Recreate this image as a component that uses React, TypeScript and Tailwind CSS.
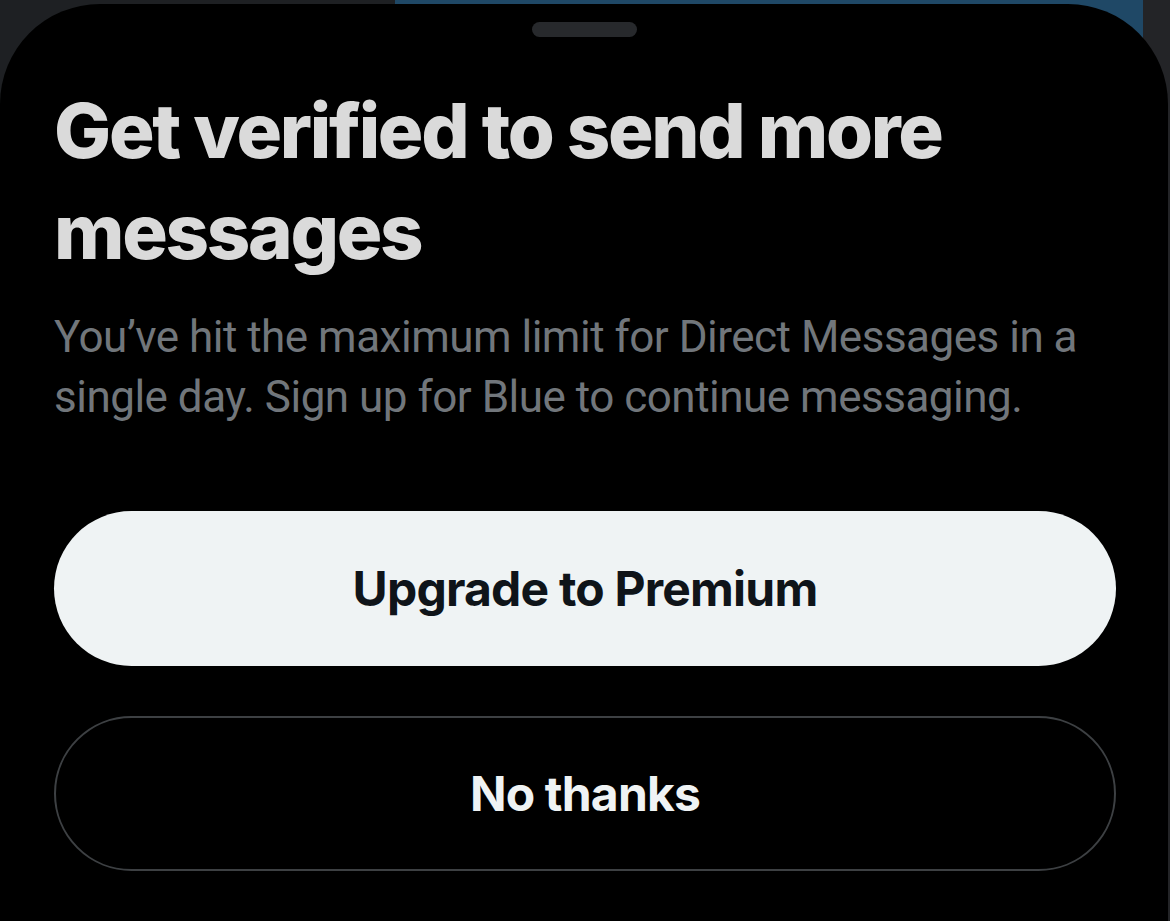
export default function App() {
  return (
    <div
      className="relative h-[921px] w-full overflow-hidden bg-black"
      style={{ fontFamily: "Inter, 'Noto Sans', sans-serif" }}
    >
      {/* page behind the sheet: sidebar, blue media strip, scroll gutter */}
      <div className="absolute inset-0 flex">
        <div className="w-[395px] bg-[#1e2023]" />
        <div className="flex-1 bg-[#1f4866]" />
        <div className="w-[27px] bg-[#232427]" />
      </div>

      <div className="relative mt-[4px] mr-[2px] flex h-[917px] flex-col rounded-t-[100px] bg-black pl-[54px] pr-[52px]">
        <div className="mt-[18px] flex justify-center">
          <div className="ml-[-2px] h-[15px] w-[105px] rounded-full bg-[#27292c]" />
        </div>

        <h1 className="mt-[43px] text-[76px] font-extrabold leading-[101px] tracking-[-2.3px] text-[#dadada]">
          Get verified to send more messages
        </h1>

        <p
          className="mt-[25px] text-[44px] leading-[60px] tracking-[-0.5px] text-[#71767b]"
          style={{ fontFamily: "Roboto, 'Noto Sans', sans-serif" }}
        >
          You’ve hit the maximum limit for Direct Messages in a single day. Sign up for Blue to continue messaging.
        </p>

        <button className="mt-[84px] flex h-[155px] w-full shrink-0 items-center justify-center rounded-full bg-[#eff3f4] text-[48px] font-bold tracking-[-0.8px] text-[#0f1419]">
          Upgrade to Premium
        </button>

        <button className="mt-[50px] flex h-[155px] w-full shrink-0 items-center justify-center rounded-full border-2 border-[#3d4043] text-[48px] font-bold tracking-[-0.8px] text-[#eff3f4]">
          No thanks
        </button>
      </div>
    </div>
  );
}
